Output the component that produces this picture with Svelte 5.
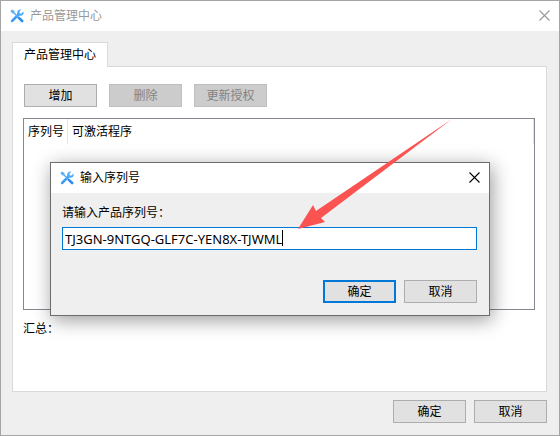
<script lang="ts">
  let serial = $state('TJ3GN-9NTGQ-GLF7C-YEN8X-TJWML');
</script>

{#snippet toolsIcon()}
  <svg class="app-icon" viewBox="0 0 14 14" aria-hidden="true">
    <path d="M2.1 12 8.6 5.500" stroke="#3d9df5" stroke-width="2.500" stroke-linecap="round" />
    <path
      d="M11.4.6 9.500 2.600l.2 1.800 1.800.2 2-2c.8 2.500-1.200 4.600-3.500 4.100L7.300 5.200C6.300 2.400 8.800-.2 11.400.6Z"
      fill="#4facfb"
    />
    <path d="M.5 1.900 2 .5l2.300 1.300.3 1.600 3.200 3.200-1.100 1.100-3.200-3.200-1.600-.3Z" fill="#5bb2fb" />
    <path d="m8.900 8.900 3.200 3.100" stroke="#2f8fee" stroke-width="2.700" stroke-linecap="round" />
  </svg>
{/snippet}

{#snippet closeIcon()}
  <svg viewBox="0 0 11 11" aria-hidden="true">
    <path d="M.5.5l10 10M10.5.5l-10 10" stroke="currentColor" stroke-width="1.1" />
  </svg>
{/snippet}

<div class="window">
  <header class="titlebar inactive">
    {@render toolsIcon()}
    <span class="title">产品管理中心</span>
    <button class="close" aria-label="关闭">{@render closeIcon()}</button>
  </header>

  <main class="body">
    <div class="tabs" role="tablist">
      <button class="tab" role="tab" aria-selected="true">产品管理中心</button>
    </div>

    <section class="panel">
      <div class="toolbar">
        <button class="btn">增加</button>
        <button class="btn" disabled>删除</button>
        <button class="btn" disabled>更新授权</button>
      </div>
      <div class="list">
        <table>
          <thead>
            <tr>
              <th class="serial-col">序列号</th>
              <th>可激活程序</th>
            </tr>
          </thead>
        </table>
      </div>
      <p class="summary">汇总：</p>
    </section>

    <footer class="actions">
      <button class="btn">确定</button>
      <button class="btn">取消</button>
    </footer>
  </main>

  <div class="dialog" role="dialog" aria-labelledby="dialog-title">
    <header class="titlebar">
      {@render toolsIcon()}
      <span class="title" id="dialog-title">输入序列号</span>
      <button class="close" aria-label="关闭">{@render closeIcon()}</button>
    </header>
    <div class="dialog-body">
      <label for="serial">请输入产品序列号：</label>
      <div class="field">
        <input id="serial" type="text" bind:value={serial} spellcheck="false" />
        <span class="caret" aria-hidden="true">{serial}</span>
      </div>
      <div class="actions">
        <button class="btn primary">确定</button>
        <button class="btn">取消</button>
      </div>
    </div>
  </div>

  <svg class="arrow" viewBox="0 0 156 112" aria-hidden="true">
    <path d="M155 1 24 100l4 4-27 7 15-24 3 6Z" fill="#fb5252" />
  </svg>
</div>

<style>
  :global(body) {
    margin: 0;
  }

  .window {
    position: relative;
    display: flex;
    flex-direction: column;
    box-sizing: border-box;
    min-height: 100vh;
    border: 1px solid #a5a5a5;
    background: #efefef;
    color: #000;
    font: 12px/16px "Noto Sans", "Noto Sans CJK SC", sans-serif;
  }

  button,
  input {
    font: inherit;
    color: inherit;
  }

  .titlebar {
    display: flex;
    align-items: center;
    height: 30px;
    padding-left: 9px;
    background: #fff;
  }

  .titlebar.inactive {
    color: #999;
  }

  .app-icon {
    width: 14px;
    height: 14px;
    margin-right: 6px;
    fill: none;
  }

  .title {
    flex: 1;
  }

  .close {
    display: flex;
    padding: 9px 9px 10px;
    border: none;
    background: none;
  }

  .close svg {
    width: 11px;
    height: 11px;
  }

  .body {
    display: flex;
    flex: 1;
    flex-direction: column;
    padding: 11px 12px 12px 11px;
  }

  .tabs {
    display: flex;
  }

  .tab {
    position: relative;
    z-index: 1;
    height: 25px;
    margin-bottom: -1px;
    padding: 0 11px;
    border: 1px solid #d9d9d9;
    border-bottom: none;
    background: #fff;
  }

  .panel {
    display: flex;
    flex: 1;
    flex-direction: column;
    margin-bottom: 8px;
    padding: 17px 11px 0 10px;
    border: 1px solid #d9d9d9;
    background: #fff;
  }

  .toolbar {
    display: flex;
    gap: 12px;
    padding-left: 1px;
  }

  .btn {
    box-sizing: border-box;
    width: 73px;
    height: 23px;
    padding: 0;
    border: 1px solid #adadad;
    background: #e1e1e1;
  }

  .btn:disabled {
    border-color: #bfbfbf;
    background: #ccc;
    color: #838383;
  }

  .btn.primary {
    border: 2px solid #0078d7;
  }

  .list {
    flex: 1;
    margin-top: 11px;
    border: 1px solid #828790;
  }

  table {
    width: 100%;
    border-collapse: separate;
    border-spacing: 0;
  }

  th {
    height: 25px;
    padding: 0 0 0 4px;
    border-right: 1px solid #e5e5e5;
    font-weight: normal;
    text-align: left;
  }

  .serial-col {
    width: 39px;
  }

  .summary {
    height: 62px;
    margin: 11px 0 8px;
  }

  .actions {
    display: flex;
    justify-content: flex-end;
    gap: 8px;
  }

  .dialog {
    position: absolute;
    top: 161px;
    right: 69px;
    left: 49px;
    border: 1px solid #6c6c6c;
    background: #efefef;
    box-shadow: 2px 4px 18px rgba(0, 0, 0, 0.4);
  }

  .dialog-body {
    padding: 12px 12px 12px 11px;
  }

  label {
    display: block;
    margin-bottom: 6px;
  }

  .field {
    position: relative;
    margin-bottom: 30px;
  }

  .field input {
    display: block;
    box-sizing: border-box;
    width: 100%;
    height: 23px;
    padding: 0 2px;
    border: 1px solid #0078d7;
    outline: none;
    background: #fff;
    font-size: 13px;
    caret-color: transparent;
  }

  .caret {
    position: absolute;
    top: 3px;
    left: 3px;
    border-right: 1px solid #000;
    color: transparent;
    font-size: 13px;
    pointer-events: none;
  }

  .arrow {
    position: absolute;
    top: 117px;
    left: 296px;
    width: 156px;
    height: 112px;
    pointer-events: none;
  }
</style>
